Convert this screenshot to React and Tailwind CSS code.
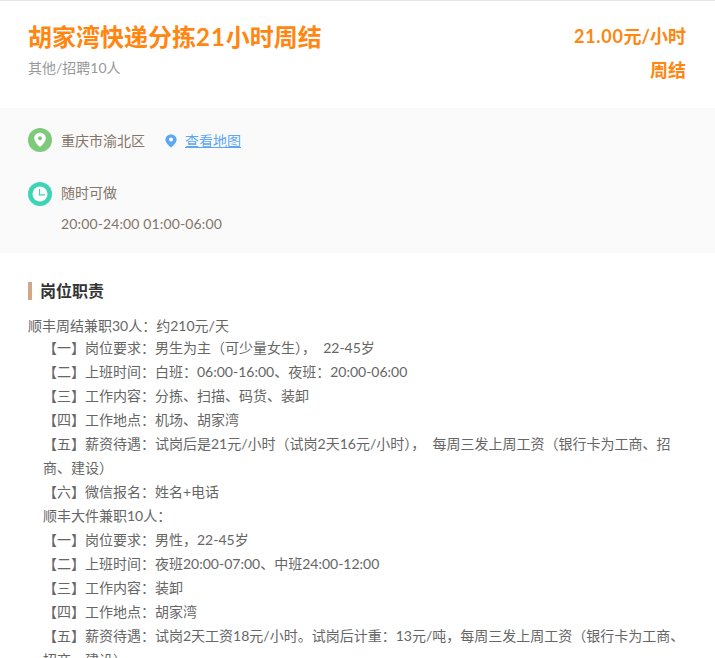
import React from "react";

const font = { fontFamily: 'Lato, "Noto Sans CJK SC", sans-serif' };

const duties = [
  { text: "顺丰周结兼职30人\uFF1A约210元/天", top: true },
  { text: "【一】岗位要求\uFF1A男生为主\uFF08可少量女生\uFF09\uFF0C\u00A0\u00A022-45岁" },
  { text: "【二】上班时间\uFF1A白班\uFF1A06:00-16:00、夜班\uFF1A20:00-06:00" },
  { text: "【三】工作内容\uFF1A分拣、扫描、码货、装卸" },
  { text: "【四】工作地点\uFF1A机场、胡家湾" },
  { text: "【五】薪资待遇\uFF1A试岗后是21元/小时\uFF08试岗2天16元/小时\uFF09\uFF0C\u00A0\u00A0每周三发上周工资\uFF08银行卡为工商、招商、建设\uFF09" },
  { text: "【六】微信报名\uFF1A姓名+电话" },
  { text: "顺丰大件兼职10人\uFF1A" },
  { text: "【一】岗位要求\uFF1A男性\uFF0C22-45岁" },
  { text: "【二】上班时间\uFF1A夜班20:00-07:00、中班24:00-12:00" },
  { text: "【三】工作内容\uFF1A装卸" },
  { text: "【四】工作地点\uFF1A胡家湾" },
  { text: "【五】薪资待遇\uFF1A试岗2天工资18元/小时。试岗后计重\uFF1A13元/吨\uFF0C每周三发上周工资\uFF08银行卡为工商、招商、建设\uFF09" },
];

function PinIcon() {
  return (
    <svg viewBox="0 0 24 24" className="h-6 w-6 shrink-0">
      <circle cx="12" cy="12" r="12" fill="#7fc97a" />
      <path d="M12 4.700c-3.200 0-5.800 2.400-5.800 5.500 0 3.400 3.600 6.900 5.800 8.900 2.200-2 5.800-5.500 5.800-8.900 0-3.100-2.600-5.500-5.800-5.500z" fill="#fff" />
      <circle cx="12" cy="10.200" r="2" fill="#7fc97a" />
    </svg>
  );
}

function ClockIcon() {
  return (
    <svg viewBox="0 0 24 24" className="h-6 w-6 shrink-0">
      <circle cx="12" cy="12" r="12" fill="#3dd4b6" />
      <circle cx="12" cy="12" r="7.500" fill="#fff" />
      <path d="M11.500 7v5.800h5.500" fill="none" stroke="#3dd4b6" strokeWidth="1.200" />
    </svg>
  );
}

function MapPin() {
  return (
    <svg viewBox="0 0 12 14" className="h-[14px] w-3 shrink-0">
      <path d="M6 .5C2.800.5.4 2.800.4 5.800c0 3 3.400 6 5.600 7.700 2.200-1.700 5.600-4.700 5.600-7.700C11.600 2.800 9.200.5 6 .5z" fill="#5ca6f2" />
      <circle cx="6" cy="5.600" r="2" fill="#fff" />
    </svg>
  );
}

export default function App() {
  return (
    <div className="h-[658px] overflow-hidden bg-white border-t border-[#e5e5e5]" style={font}>
      <div className="flex h-[107px] justify-between pl-7 pr-[29px] pt-[18px]">
        <div>
          <h1 className="text-2xl leading-9 font-bold text-[#ff8610]">
            胡家湾快递分拣<span className="tracking-[1px]">21</span>小时周结
          </h1>
          <p className="mt-[3px] text-sm leading-5 text-[#999999]">其他/招聘10人</p>
        </div>
        <div className="w-[130px] text-right text-lg leading-[34px] font-bold text-[#ff8610]">
          <span className="tracking-[0.7px]">21.00</span>元/小时 周结
        </div>
      </div>

      <div className="h-[145px] bg-[#fafafa] px-7 pt-5 text-sm text-[#857468]">
        <div className="flex h-6 items-center">
          <PinIcon />
          <span className="ml-[9px] translate-y-px">重庆市渝北区</span>
          <span className="ml-5 mr-2 translate-y-px"><MapPin /></span>
          <a className="translate-y-px text-[#5ca6f2] underline">查看地图</a>
        </div>
        <div className="mt-[30px] flex h-6 items-center">
          <ClockIcon />
          <span className="ml-[9px] -translate-y-px">随时可做</span>
        </div>
        <p className="mt-[6px] pl-[33px] leading-6 tracking-[0.13px]">20:00-24:00 01:00-06:00</p>
      </div>

      <div className="pl-7 pr-7 pt-[29px]">
        <h2 className="border-l-4 border-[#d1a788] pl-2 text-base leading-[18px] font-bold text-[#333333]">岗位职责</h2>
        <div className="mt-[14px] text-sm leading-6 text-[#666666]">
          {duties.map((item) => (
            <p key={item.text} className={item.top ? "h-[22px]" : "pl-[15px]"}>{item.text}</p>
          ))}
        </div>
      </div>
    </div>
  );
}
